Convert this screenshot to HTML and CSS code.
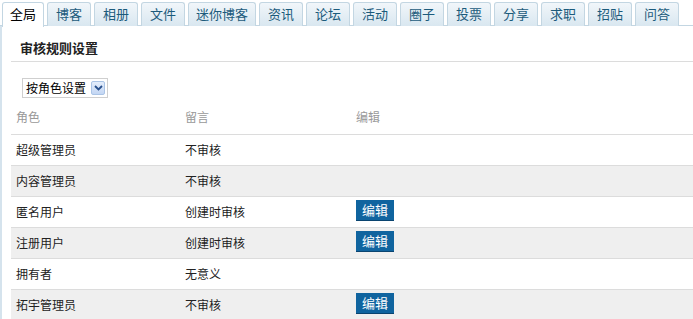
FILE: index.html
```html
<!DOCTYPE html>
<html lang="zh-CN">

<head>
  <meta charset="UTF-8">
  <link rel="stylesheet" href="styles.css">
</head>

<body>
  <div class="tabs">
    <span class="tab active">全局</span>
    <span class="tab">博客</span>
    <span class="tab">相册</span>
    <span class="tab">文件</span>
    <span class="tab wide">迷你博客</span>
    <span class="tab">资讯</span>
    <span class="tab">论坛</span>
    <span class="tab">活动</span>
    <span class="tab">圈子</span>
    <span class="tab">投票</span>
    <span class="tab">分享</span>
    <span class="tab">求职</span>
    <span class="tab">招贴</span>
    <span class="tab">问答</span>
  </div>

  <div class="panel">
    <h2 class="panel-title">审核规则设置</h2>

    <div class="picker">
      <span class="picker-text">按角色设置</span>
      <span class="picker-arrow">
        <svg width="9" height="6" viewBox="0 0 9 6"><path d="M1 1 L4.5 4.5 L8 1" fill="none" stroke="#274f8c" stroke-width="1.8"/></svg>
      </span>
    </div>

    <table class="rules">
      <thead>
        <tr>
          <th class="col-role">角色</th>
          <th class="col-msg">留言</th>
          <th>编辑</th>
        </tr>
      </thead>
      <tbody>
        <tr><td>超级管理员</td><td>不审核</td><td></td></tr>
        <tr class="alt"><td>内容管理员</td><td>不审核</td><td></td></tr>
        <tr><td>匿名用户</td><td>创建时审核</td><td><span class="btn">编辑</span></td></tr>
        <tr class="alt"><td>注册用户</td><td>创建时审核</td><td><span class="btn">编辑</span></td></tr>
        <tr><td>拥有者</td><td>无意义</td><td></td></tr>
        <tr class="alt"><td>拓宇管理员</td><td>不审核</td><td><span class="btn">编辑</span></td></tr>
      </tbody>
    </table>
  </div>
</body>

</html>
```

FILE: styles.css
```css
*,
*::before,
*::after {
  box-sizing: border-box;
}

:root {
  --tab-border: #c3d6e2;
  --row-line: #dcdcdc;
}

body {
  margin: 0;
  font-family: "Noto Sans CJK SC", "DejaVu Sans", sans-serif;
  font-size: 12px;
  color: #333;
  background: #fff;
  overflow: hidden;
}

.tabs {
  display: flex;
  gap: 3px;
  padding: 2px 0 0 2px;
  height: 26px;
  border-bottom: 1px solid var(--tab-border);
}

.tab {
  width: 44px;
  height: 24px;
  border: 1px solid var(--tab-border);
  border-bottom: none;
  border-radius: 3px 3px 0 0;
  background: linear-gradient(#f1f6fa, #d9e7f0);
  color: #1c5b7c;
  font-size: 13px;
  line-height: 21px;
  text-align: center;
}

.tab.wide {
  width: 68px;
}

.tab.active {
  width: 42px;
  height: 25px;
  background: #fff;
  color: #000;
}

.panel {
  border-left: 2px solid #d5e3ed;
  padding-left: 9px;
  min-height: 300px;
}

.panel-title {
  margin: 0;
  padding: 13px 0 4px 9px;
  font-size: 13px;
  line-height: 18px;
  font-weight: bold;
  color: #222;
  border-bottom: 1px solid #dcdcdc;
}

.picker {
  display: inline-flex;
  align-items: center;
  margin: 16px 0 0 11px;
  height: 20px;
  padding: 0 2px 0 3px;
  border: 1px solid #cfcfcf;
  background: #fff;
}

.picker-text {
  color: #000;
  font-size: 12px;
  line-height: 16px;
  margin-right: 5px;
}

.picker-arrow {
  display: flex;
  align-items: center;
  justify-content: center;
  width: 14px;
  height: 14px;
  border: 1px solid #aac4e6;
  border-radius: 2px;
  background: linear-gradient(#e3edfb, #c3d6f3);
}

.rules {
  width: 100%;
  margin-top: 6px;
  border-collapse: collapse;
}

.rules th,
.rules td {
  padding: 0 0 0 5px;
  text-align: left;
  vertical-align: middle;
  font-weight: normal;
  line-height: 16px;
}

.rules th {
  height: 30px;
  padding-bottom: 3px;
  color: #999;
  border-bottom: 1px solid var(--row-line);
}

.col-role {
  width: 169px;
}

.col-msg {
  width: 171px;
}

.rules td {
  height: 31px;
  border-top: 1px solid var(--row-line);
  color: #222;
}

.rules tr.alt td {
  background: #efefef;
}

.btn {
  display: inline-block;
  width: 38px;
  height: 21px;
  margin-top: -2px;
  background: #10649f;
  border-bottom: 1px solid #0a4470;
  color: #fff;
  font-size: 13px;
  line-height: 20px;
  text-align: center;
  vertical-align: middle;
}
```
